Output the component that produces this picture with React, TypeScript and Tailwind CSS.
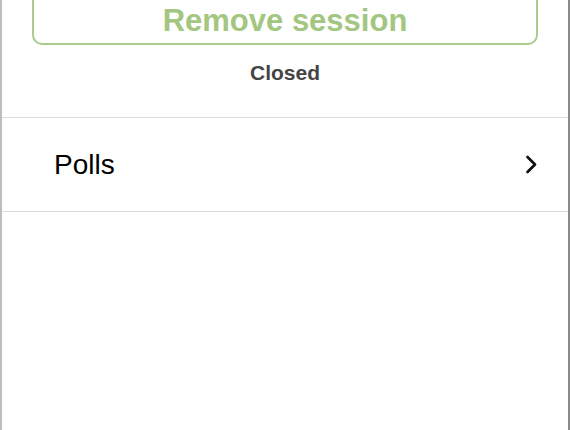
import React from 'react';

const font = { fontFamily: '"Liberation Sans", Arial, sans-serif' };

function ChevronRight() {
  return (
    <svg width="12" height="19" viewBox="0 0 12 19" fill="none">
      <polyline
        points="2.5,2 10,9.5 2.5,17"
        stroke="#111"
        strokeWidth="2.7"
        strokeLinecap="round"
        strokeLinejoin="round"
      />
    </svg>
  );
}

export default function App() {
  return (
    <div
      className="w-[570px] h-[430px] overflow-hidden bg-white border-l-2 border-l-[#bdbdbd] border-r-2 border-r-[#8a8a8a] flex flex-col"
      style={font}
    >
      <div className="px-[30px]">
        <button
          type="button"
          className="-mt-[12px] w-full h-[57px] rounded-[10px] border-2 border-[#a9cc8b] bg-white flex items-center justify-center"
        >
          <span className="text-[31px] leading-[36px] font-bold text-[#a3c681] pt-[8px]">Remove session</span>
        </button>
      </div>

      <div className="mt-[16px] mb-[32px] text-center text-[21px] leading-[24px] font-bold text-[#444444]">
        Closed
      </div>

      <div className="border-t border-b border-[#dcdcdc] h-[95px] flex items-center justify-between pl-[52px] pr-[31px]">
        <span className="text-[28px] leading-[32px] text-black">Polls</span>
        <ChevronRight />
      </div>
    </div>
  );
}
